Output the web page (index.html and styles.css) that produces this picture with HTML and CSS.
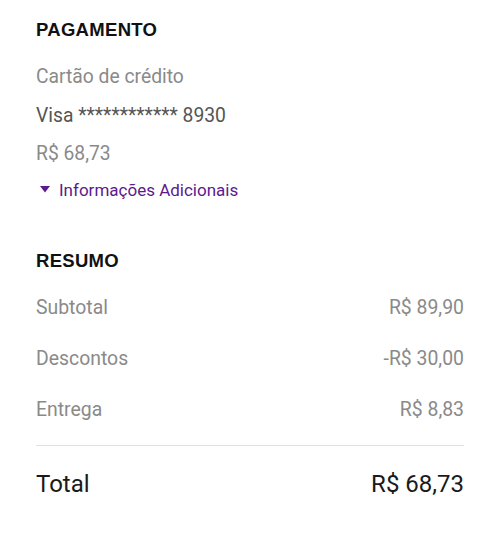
FILE: index.html
```html
<!DOCTYPE html>
<html lang="pt-BR">
  <head>
    <meta charset="UTF-8" />
    <meta name="viewport" content="width=device-width, initial-scale=1.0" />
    <title>Pagamento</title>
    <link rel="stylesheet" href="styles.css">
  </head>
  <body>
    <div class="box" id="payment">
      <h2>PAGAMENTO</h2>
      <div class="line muted">Cartão de crédito</div>
      <div class="line dark">Visa ************ 8930</div>
      <div class="line muted">R$ 68,73</div>
      <a class="more" href="#">
        <svg width="10" height="7" viewBox="0 0 10 7"><path d="M0 0 L10 0 L5 6.5 Z" fill="#5b1a8e" /></svg>
        Informações Adicionais
      </a>
    </div>

    <div class="box" id="summary">
      <h2>RESUMO</h2>
      <div class="row"><span>Subtotal</span><span>R$ 89,90</span></div>
      <div class="row"><span>Descontos</span><span>-R$ 30,00</span></div>
      <div class="row"><span>Entrega</span><span>R$ 8,83</span></div>
      <div class="row total"><span>Total</span><span>R$ 68,73</span></div>
    </div>
  </body>
</html>
```

FILE: styles.css
```css
body {
  margin: 0;
  padding-top: 18px;
  background-color: #ffffff;
  font-family: Roboto, "Noto Sans", sans-serif;
}
.box {
  padding: 0 36px;
}
.box h2 {
  margin: 0;
  font-family: "Liberation Sans", Arial, sans-serif;
  font-size: 18.5px;
  letter-spacing: 0.3px;
  line-height: 24px;
  font-weight: bold;
  color: #111;
}
.line {
  font-size: 19.3px;
  line-height: 38.5px;
}
#payment h2 {
  margin-bottom: 16px;
}
.muted {
  color: #8a8a8a;
}
.dark {
  color: #555;
}
.more {
  display: flex;
  align-items: center;
  gap: 9px;
  margin-top: 4px;
  padding-left: 4px;
  font-size: 17px;
  line-height: 24px;
  color: #5b1a8e;
  text-decoration: none;
}
#summary {
  margin-top: 47px;
}
#summary h2 {
  margin-bottom: 9px;
}
.row {
  display: flex;
  justify-content: space-between;
  font-size: 19.4px;
  line-height: 51px;
  color: #8a8a8a;
}
.row.total {
  margin-top: 10px;
  padding-top: 20px;
  border-top: 1px solid #e2e2e2;
  font-size: 24px;
  line-height: 36px;
  color: #1a1a1a;
}
```
